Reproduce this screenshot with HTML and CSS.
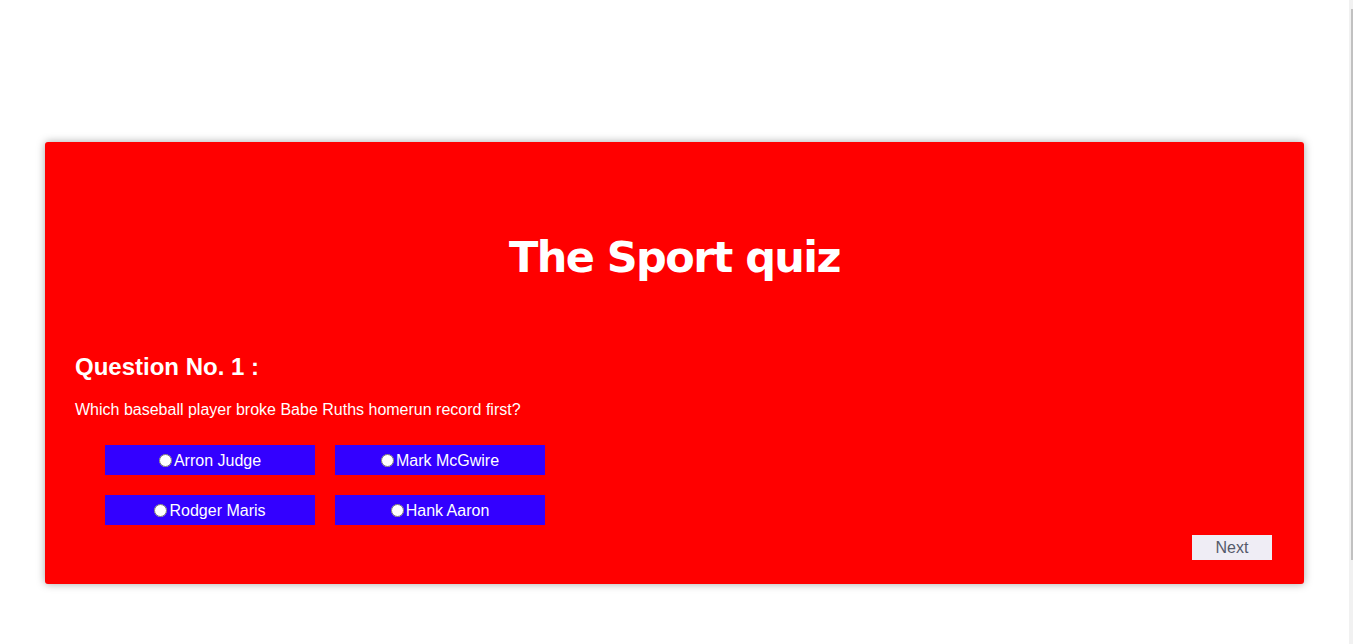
FILE: index.html
```html
<!DOCTYPE html>
<html lang="en">
<head>
<meta charset="utf-8">
<title>The Sport quiz</title>
<link rel="stylesheet" href="styles.css">
</head>
<body>
<div class="quiz">
  <h1 class="title">The Sport quiz</h1>
  <h2 class="q-no">Question No. 1 :</h2>
  <p class="q-text">Which baseball player broke Babe Ruths homerun record first?</p>
  <div class="options">
    <label class="option"><input type="radio" name="ans">Arron Judge</label>
    <label class="option"><input type="radio" name="ans">Mark McGwire</label>
    <label class="option"><input type="radio" name="ans">Rodger Maris</label>
    <label class="option"><input type="radio" name="ans">Hank Aaron</label>
  </div>
  <div class="actions"><button class="next">Next</button></div>
</div>
<div class="scrollbar"><div class="thumb"></div></div>
</body>
</html>
```

FILE: styles.css
```css
html, body {
  margin: 0;
  padding: 0;
  background: #ffffff;
}
body {
  font-family: "Liberation Sans", Arial, sans-serif;
  height: 644px;
  overflow: hidden;
}
.quiz {
  margin: 142px 0 0 45px;
  width: 1259px;
  height: 442px;
  box-sizing: border-box;
  background: #ff0000;
  border-radius: 3px;
  box-shadow: 0 0 8px rgba(0, 0, 0, 0.35);
  padding: 0 32px 24px 30px;
  display: flex;
  flex-direction: column;
  color: #ffffff;
}
.title {
  margin: 0;
  padding-top: 80px;
  line-height: 70px;
  height: 70px;
  text-align: center;
  font-family: "Comic Sans MS", "DejaVu Sans", sans-serif;
  font-size: 43px;
  font-weight: bold;
  letter-spacing: -1.6px;
  padding-left: 2px;
}
.q-no {
  margin: 61px 0 0;
  font-size: 24px;
  line-height: 28px;
  font-weight: bold;
}
.q-text {
  margin: 19px 0 0;
  font-size: 16px;
  line-height: 20px;
}
.options {
  margin: 25px 0 0 30px;
  display: grid;
  grid-template-columns: 210px 210px;
  column-gap: 20px;
  row-gap: 20px;
}
.option {
  height: 30px;
  background: #3300ff;
  display: flex;
  align-items: center;
  justify-content: center;
  font-size: 16px;
  color: #ffffff;
  padding-top: 1px;
  box-sizing: border-box;
}
.option input {
  margin: 0 2px 0 0;
  width: 13px;
  height: 13px;
}
.actions {
  margin-top: 10px;
  display: flex;
  justify-content: flex-end;
}
.next {
  width: 80px;
  height: 25px;
  border: none;
  background: #efedf5;
  color: #555a6a;
  font-family: "Liberation Sans", Arial, sans-serif;
  font-size: 16px;
  padding: 0;
}
.scrollbar {
  position: fixed;
  top: 0;
  right: 0;
  width: 4px;
  height: 100%;
  background: #f1f1f1;
}
.thumb {
  margin: 9px 0 0 2px;
  width: 2px;
  height: 551px;
  background: #c1c1c1;
}
```
